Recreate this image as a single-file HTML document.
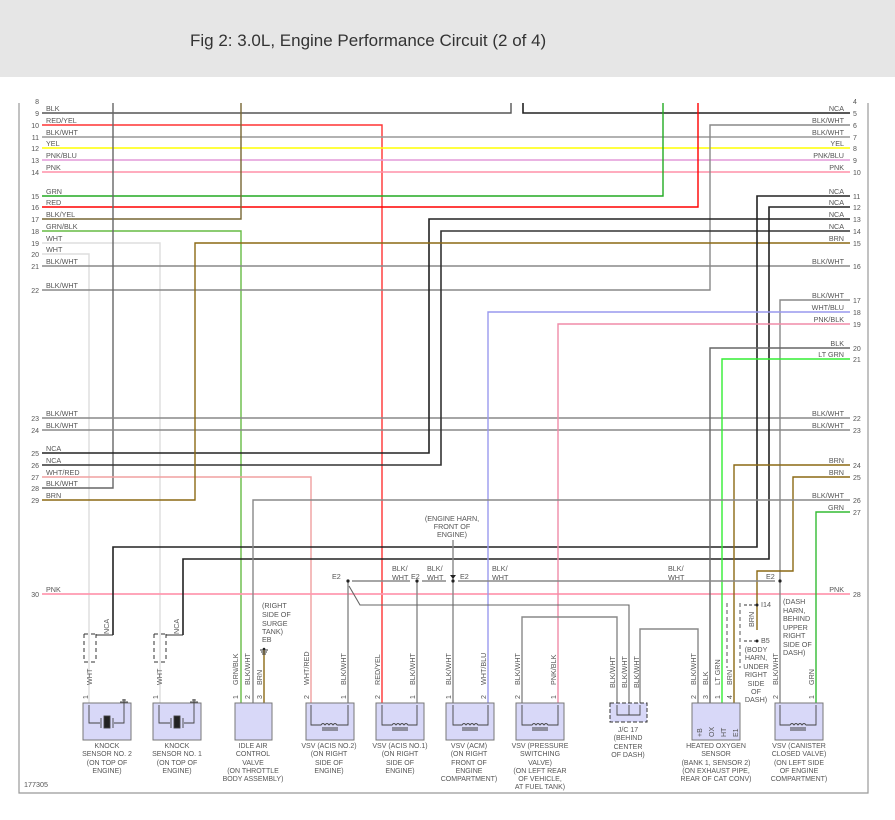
<!DOCTYPE html>
<html><head><meta charset="utf-8"><style>
html,body{margin:0;padding:0;background:#fff;width:895px;height:820px;overflow:hidden}
svg text{font-family:"Liberation Sans",sans-serif;fill:#555}
.l{font-size:7.2px}
.c{font-size:7px;text-anchor:middle}
.n{font-size:7px;fill:#666}
</style></head><body>
<svg width="895" height="820" viewBox="0 0 895 820" xmlns="http://www.w3.org/2000/svg">
<rect x="0" y="0" width="895" height="77" fill="#e6e6e6"/>
<text x="190" y="46" style="font-size:17px;fill:#333">Fig 2: 3.0L, Engine Performance Circuit (2 of 4)</text>
<!-- frame -->
<path d="M19 103 V793 H868 V103" fill="none" stroke="#999" stroke-width="1.2"/>

<g fill="none" stroke-width="1.4">
<!-- left side horizontal rows -->
<path d="M42 113 H511 V103" stroke="#555"/>
<path d="M523 103 V113 H850" stroke="#222" stroke-width="1.6"/>
<path d="M42 125 H382 V703" stroke="#f33"/>
<path d="M42 137 H850" stroke="#999"/>
<path d="M42 148 H850" stroke="#ff0" stroke-width="1.6"/>
<path d="M42 160 H850" stroke="#e49ad8"/>
<path d="M42 172 H850" stroke="#ff90a8"/>
<path d="M42 196 H663 V103" stroke="#2a2"/>
<path d="M42 207 H698 V103" stroke="#f00"/>
<path d="M42 219 H241 V103" stroke="#776633"/>
<path d="M42 231 H241 V703" stroke="#6b4"/>
<path d="M42 243 H160 V703" stroke="#ddd"/>
<path d="M42 254 H89 V703" stroke="#ddd"/>
<path d="M42 266 H850" stroke="#888"/>
<path d="M42 290 H710 V125 H850" stroke="#888"/>
<path d="M113 103 V488 H42" stroke="#666"/>
<path d="M42 418 H850" stroke="#888"/>
<path d="M42 430 H850" stroke="#888"/>
<path d="M42 453 H429 V219 H850" stroke="#222" stroke-width="1.6"/>
<path d="M42 465 H441 V231 H850" stroke="#333" stroke-width="1.6"/>
<path d="M42 477 H311 V703" stroke="#f0a0a0"/>
<path d="M42 500 H195 V243 H850" stroke="#8b6914"/>
<path d="M42 594 H850" stroke="#ff99b0" stroke-width="1.8"/>
<!-- right side -->
<path d="M850 196 H757 V547 H113 V635" stroke="#222" stroke-width="1.6"/>
<path d="M850 207 H769 V559 H183 V635" stroke="#222" stroke-width="1.6"/>
<path d="M850 300 H780 V703" stroke="#888"/>
<path d="M850 312 H488 V703" stroke="#99e"/>
<path d="M850 324 H558 V703" stroke="#f08ca8"/>
<path d="M850 348 H710 V703" stroke="#666"/>
<path d="M850 359 H722 V703" stroke="#3e3"/>
<path d="M850 465 H734 V703" stroke="#8b6914"/>
<path d="M850 477 H793 V571 H757 V630" stroke="#8b6914"/>
<path d="M850 500 H253 V703" stroke="#888"/>
<path d="M850 512 H816 V703" stroke="#3b3"/>
<!-- E2 -->
<path d="M352 581 H410 M422 581 H446 M458 581 H775" stroke="#888"/>
<path d="M348 581 V703 M417 581 V703 M453 540 V703" stroke="#888"/>
<path d="M349 586 L360 605 H629 V703" stroke="#666" stroke-width="1.1"/>
<path d="M522 703 V617 H617 V703" stroke="#888"/>
<path d="M640 703 V629 H698 V703" stroke="#888"/>
<path d="M264 648 V703" stroke="#8b6914"/>
</g>
<g fill="#222"><circle cx="348" cy="581" r="1.6"/><circle cx="417" cy="581" r="1.6"/><circle cx="453" cy="581" r="1.6"/><circle cx="780" cy="581" r="1.6"/><path d="M450 575 h6 l-3 4z"/></g>

<!-- left labels -->
<g class="l">
<text x="46" y="111">BLK</text><text x="46" y="123">RED/YEL</text><text x="46" y="135">BLK/WHT</text><text x="46" y="146">YEL</text><text x="46" y="158">PNK/BLU</text><text x="46" y="170">PNK</text>
<text x="46" y="194">GRN</text><text x="46" y="205">RED</text><text x="46" y="217">BLK/YEL</text><text x="46" y="229">GRN/BLK</text><text x="46" y="241">WHT</text><text x="46" y="252">WHT</text><text x="46" y="264">BLK/WHT</text><text x="46" y="288">BLK/WHT</text>
<text x="46" y="416">BLK/WHT</text><text x="46" y="428">BLK/WHT</text><text x="46" y="451">NCA</text><text x="46" y="463">NCA</text><text x="46" y="475">WHT/RED</text><text x="46" y="486">BLK/WHT</text><text x="46" y="498">BRN</text><text x="46" y="592">PNK</text>
</g>
<g class="n" text-anchor="end">
<text x="39" y="104">8</text><text x="39" y="116">9</text><text x="39" y="128">10</text><text x="39" y="140">11</text><text x="39" y="151">12</text><text x="39" y="163">13</text><text x="39" y="175">14</text><text x="39" y="199">15</text><text x="39" y="210">16</text><text x="39" y="222">17</text><text x="39" y="234">18</text><text x="39" y="246">19</text><text x="39" y="257">20</text><text x="39" y="269">21</text><text x="39" y="293">22</text><text x="39" y="421">23</text><text x="39" y="433">24</text><text x="39" y="456">25</text><text x="39" y="468">26</text><text x="39" y="480">27</text><text x="39" y="491">28</text><text x="39" y="503">29</text><text x="39" y="597">30</text>
</g>
<!-- right labels -->
<g class="l" text-anchor="end">
<text x="844" y="111">NCA</text><text x="844" y="123">BLK/WHT</text><text x="844" y="135">BLK/WHT</text><text x="844" y="146">YEL</text><text x="844" y="158">PNK/BLU</text><text x="844" y="170">PNK</text>
<text x="844" y="194">NCA</text><text x="844" y="205">NCA</text><text x="844" y="217">NCA</text><text x="844" y="229">NCA</text><text x="844" y="241">BRN</text><text x="844" y="264">BLK/WHT</text>
<text x="844" y="298">BLK/WHT</text><text x="844" y="310">WHT/BLU</text><text x="844" y="322">PNK/BLK</text><text x="844" y="346">BLK</text><text x="844" y="357">LT GRN</text>
<text x="844" y="416">BLK/WHT</text><text x="844" y="428">BLK/WHT</text><text x="844" y="463">BRN</text><text x="844" y="475">BRN</text><text x="844" y="498">BLK/WHT</text><text x="844" y="510">GRN</text><text x="844" y="592">PNK</text>
</g>
<g class="n">
<text x="853" y="104">4</text><text x="853" y="116">5</text><text x="853" y="128">6</text><text x="853" y="140">7</text><text x="853" y="151">8</text><text x="853" y="163">9</text><text x="853" y="175">10</text><text x="853" y="199">11</text><text x="853" y="210">12</text><text x="853" y="222">13</text><text x="853" y="234">14</text><text x="853" y="246">15</text><text x="853" y="269">16</text><text x="853" y="303">17</text><text x="853" y="315">18</text><text x="853" y="327">19</text><text x="853" y="351">20</text><text x="853" y="362">21</text><text x="853" y="421">22</text><text x="853" y="433">23</text><text x="853" y="468">24</text><text x="853" y="480">25</text><text x="853" y="503">26</text><text x="853" y="515">27</text><text x="853" y="597">28</text>
</g>
<!-- mid labels -->
<g class="l">
<text x="332" y="579">E2</text><text x="392" y="571">BLK/</text><text x="392" y="580">WHT</text><text x="411" y="579">E2</text><text x="427" y="571">BLK/</text><text x="427" y="580">WHT</text><text x="460" y="579">E2</text><text x="492" y="571">BLK/</text><text x="492" y="580">WHT</text>
<text x="668" y="571">BLK/</text><text x="668" y="580">WHT</text><text x="766" y="579">E2</text>
<text x="452" y="521" text-anchor="middle">(ENGINE HARN,</text><text x="452" y="529" text-anchor="middle">FRONT OF</text><text x="452" y="537" text-anchor="middle">ENGINE)</text>
<text x="262" y="608">(RIGHT</text><text x="262" y="617">SIDE OF</text><text x="262" y="626">SURGE</text><text x="262" y="634">TANK)</text><text x="262" y="642">EB</text>
<text x="783" y="604">(DASH</text><text x="783" y="613">HARN,</text><text x="783" y="621">BEHIND</text><text x="783" y="630">UPPER</text><text x="783" y="638">RIGHT</text><text x="783" y="647">SIDE OF</text><text x="783" y="655">DASH)</text>
<text x="761" y="607">I14</text><text x="761" y="643">B5</text>
<text x="756" y="652" text-anchor="middle">(BODY</text><text x="756" y="660" text-anchor="middle">HARN,</text><text x="756" y="669" text-anchor="middle">UNDER</text><text x="756" y="677" text-anchor="middle">RIGHT</text><text x="756" y="686" text-anchor="middle">SIDE</text><text x="756" y="694" text-anchor="middle">OF</text><text x="756" y="702" text-anchor="middle">DASH)</text>
<text x="24" y="787">177305</text>
</g>
<!-- I14/B5 connectors -->
<g stroke="#333" fill="none" stroke-width="1">
<path d="M744 605 H757 M744 641 H757" stroke-dasharray="3,2"/>
<path d="M727 603 V668 M740 603 V668" stroke-dasharray="4,3" stroke="#555"/>
<path d="M757 605 V630" stroke="#8b6914"/>
<path d="M84 634 V662 M96 634 V662 M84 634 H96 M84 662 H96 M154 634 V662 M166 634 V662 M154 634 H166 M154 662 H166" stroke-dasharray="4,3"/>
<path d="M96 635 H113 M166 635 H183"/>
<path d="M610 703 H647 V722 H610Z" stroke-dasharray="4,2" fill="#d8d8f8"/>
<path d="M260 650 h8 M261 652 h6 M262 654 h4"/>
</g>
<g fill="#222"><circle cx="757" cy="605" r="1.5"/><circle cx="757" cy="641" r="1.5"/><circle cx="264" cy="649" r="1.3"/></g>
<g class="l" transform="rotate(-90)">
<text x="-634" y="109">NCA</text><text x="-634" y="179">NCA</text><text x="-627" y="754">BRN</text>
</g>
<!-- components -->
<g fill="#d8d8f8" stroke="#777" stroke-width="1">
<rect x="83" y="703" width="48" height="37"/><rect x="153" y="703" width="48" height="37"/>
<rect x="235" y="703" width="37" height="37"/>
<rect x="306" y="703" width="48" height="37"/><rect x="376" y="703" width="48" height="37"/>
<rect x="446" y="703" width="48" height="37"/><rect x="516" y="703" width="48" height="37"/>
<rect x="692" y="703" width="48" height="37"/><rect x="775" y="703" width="48" height="37"/>
</g>
<g fill="none" stroke="#444" stroke-width="0.9">
<path d="M89 705 V723 H100 M114 723 H124 V705"/><rect x="104" y="716" width="6" height="12" fill="#222"/><path d="M101 718 V728 M113 718 V728"/>
<path d="M159 705 V723 H170 M184 723 H194 V705"/><rect x="174" y="716" width="6" height="12" fill="#222"/><path d="M171 718 V728 M183 718 V728"/>
<path d="M311 705 V725 H321 q2 -3 4 0 q2 -3 4 0 q2 -3 4 0 q2 -3 4 0 H348 V705 M322 728 H338 M322 730 H338"/>
<path d="M382 705 V725 H392 q2 -3 4 0 q2 -3 4 0 q2 -3 4 0 q2 -3 4 0 H417 V705 M392 728 H408 M392 730 H408"/>
<path d="M453 705 V725 H462 q2 -3 4 0 q2 -3 4 0 q2 -3 4 0 q2 -3 4 0 H488 V705 M462 728 H478 M462 730 H478"/>
<path d="M522 705 V725 H532 q2 -3 4 0 q2 -3 4 0 q2 -3 4 0 q2 -3 4 0 H558 V705 M532 728 H548 M532 730 H548"/>
<path d="M780 705 V725 H790 q2 -3 4 0 q2 -3 4 0 q2 -3 4 0 q2 -3 4 0 H816 V705 M790 728 H806 M790 730 H806"/>
<path d="M617 705 V715 H640 V705 M629 705 V715"/>
<path d="M120 702 h8 M122 700 h4 M124 699 V705 M190 702 h8 M192 700 h4 M194 699 V705"/>
</g>
<g class="n" transform="rotate(-90)">
<text x="-737" y="702">+B</text><text x="-737" y="714">OX</text><text x="-737" y="726">HT</text><text x="-737" y="738">E1</text>
</g>
<!-- vertical wire labels at components -->
<g class="l" transform="rotate(-90)">
<text x="-685" y="92">WHT</text><text x="-685" y="162">WHT</text>
<text x="-685" y="238">GRN/BLK</text><text x="-685" y="250">BLK/WHT</text><text x="-685" y="262">BRN</text>
<text x="-685" y="309">WHT/RED</text><text x="-685" y="346">BLK/WHT</text>
<text x="-685" y="380">RED/YEL</text><text x="-685" y="415">BLK/WHT</text>
<text x="-685" y="451">BLK/WHT</text><text x="-685" y="486">WHT/BLU</text>
<text x="-685" y="520">BLK/WHT</text><text x="-685" y="556">PNK/BLK</text>
<text x="-688" y="615">BLK/WHT</text><text x="-688" y="627">BLK/WHT</text><text x="-688" y="639">BLK/WHT</text>
<text x="-685" y="696">BLK/WHT</text><text x="-685" y="708">BLK</text><text x="-685" y="720">LT GRN</text><text x="-685" y="732">BRN</text>
<text x="-685" y="778">BLK/WHT</text><text x="-685" y="814">GRN</text>
</g>
<g class="n" transform="rotate(-90)">
<text x="-699" y="88">1</text><text x="-699" y="158">1</text><text x="-699" y="238">1</text><text x="-699" y="250">2</text><text x="-699" y="262">3</text>
<text x="-699" y="309">2</text><text x="-699" y="346">1</text><text x="-699" y="380">2</text><text x="-699" y="415">1</text>
<text x="-699" y="451">1</text><text x="-699" y="486">2</text><text x="-699" y="520">2</text><text x="-699" y="556">1</text>
<text x="-699" y="696">2</text><text x="-699" y="708">3</text><text x="-699" y="720">1</text><text x="-699" y="732">4</text>
<text x="-699" y="778">2</text><text x="-699" y="814">1</text>
</g>
<!-- component labels -->
<g class="c">
<text x="107" y="748">KNOCK</text><text x="107" y="756">SENSOR NO. 2</text><text x="107" y="765">(ON TOP OF</text><text x="107" y="773">ENGINE)</text>
<text x="177" y="748">KNOCK</text><text x="177" y="756">SENSOR NO. 1</text><text x="177" y="765">(ON TOP OF</text><text x="177" y="773">ENGINE)</text>
<text x="253" y="748">IDLE AIR</text><text x="253" y="756">CONTROL</text><text x="253" y="765">VALVE</text><text x="253" y="773">(ON THROTTLE</text><text x="253" y="781">BODY ASSEMBLY)</text>
<text x="329" y="748">VSV (ACIS NO.2)</text><text x="329" y="756">(ON RIGHT</text><text x="329" y="765">SIDE OF</text><text x="329" y="773">ENGINE)</text>
<text x="400" y="748">VSV (ACIS NO.1)</text><text x="400" y="756">(ON RIGHT</text><text x="400" y="765">SIDE OF</text><text x="400" y="773">ENGINE)</text>
<text x="469" y="748">VSV (ACM)</text><text x="469" y="756">(ON RIGHT</text><text x="469" y="765">FRONT OF</text><text x="469" y="773">ENGINE</text><text x="469" y="781">COMPARTMENT)</text>
<text x="540" y="748">VSV (PRESSURE</text><text x="540" y="756">SWITCHING</text><text x="540" y="765">VALVE)</text><text x="540" y="773">(ON LEFT REAR</text><text x="540" y="781">OF VEHICLE,</text><text x="540" y="789">AT FUEL TANK)</text>
<text x="628" y="732">J/C 17</text><text x="628" y="740">(BEHIND</text><text x="628" y="749">CENTER</text><text x="628" y="757">OF DASH)</text>
<text x="716" y="748">HEATED OXYGEN</text><text x="716" y="756">SENSOR</text><text x="716" y="765">(BANK 1, SENSOR 2)</text><text x="716" y="773">(ON EXHAUST PIPE,</text><text x="716" y="781">REAR OF CAT CONV)</text>
<text x="799" y="748">VSV (CANISTER</text><text x="799" y="756">CLOSED VALVE)</text><text x="799" y="765">(ON LEFT SIDE</text><text x="799" y="773">OF ENGINE</text><text x="799" y="781">COMPARTMENT)</text>
</g>
</svg>
</body></html>
